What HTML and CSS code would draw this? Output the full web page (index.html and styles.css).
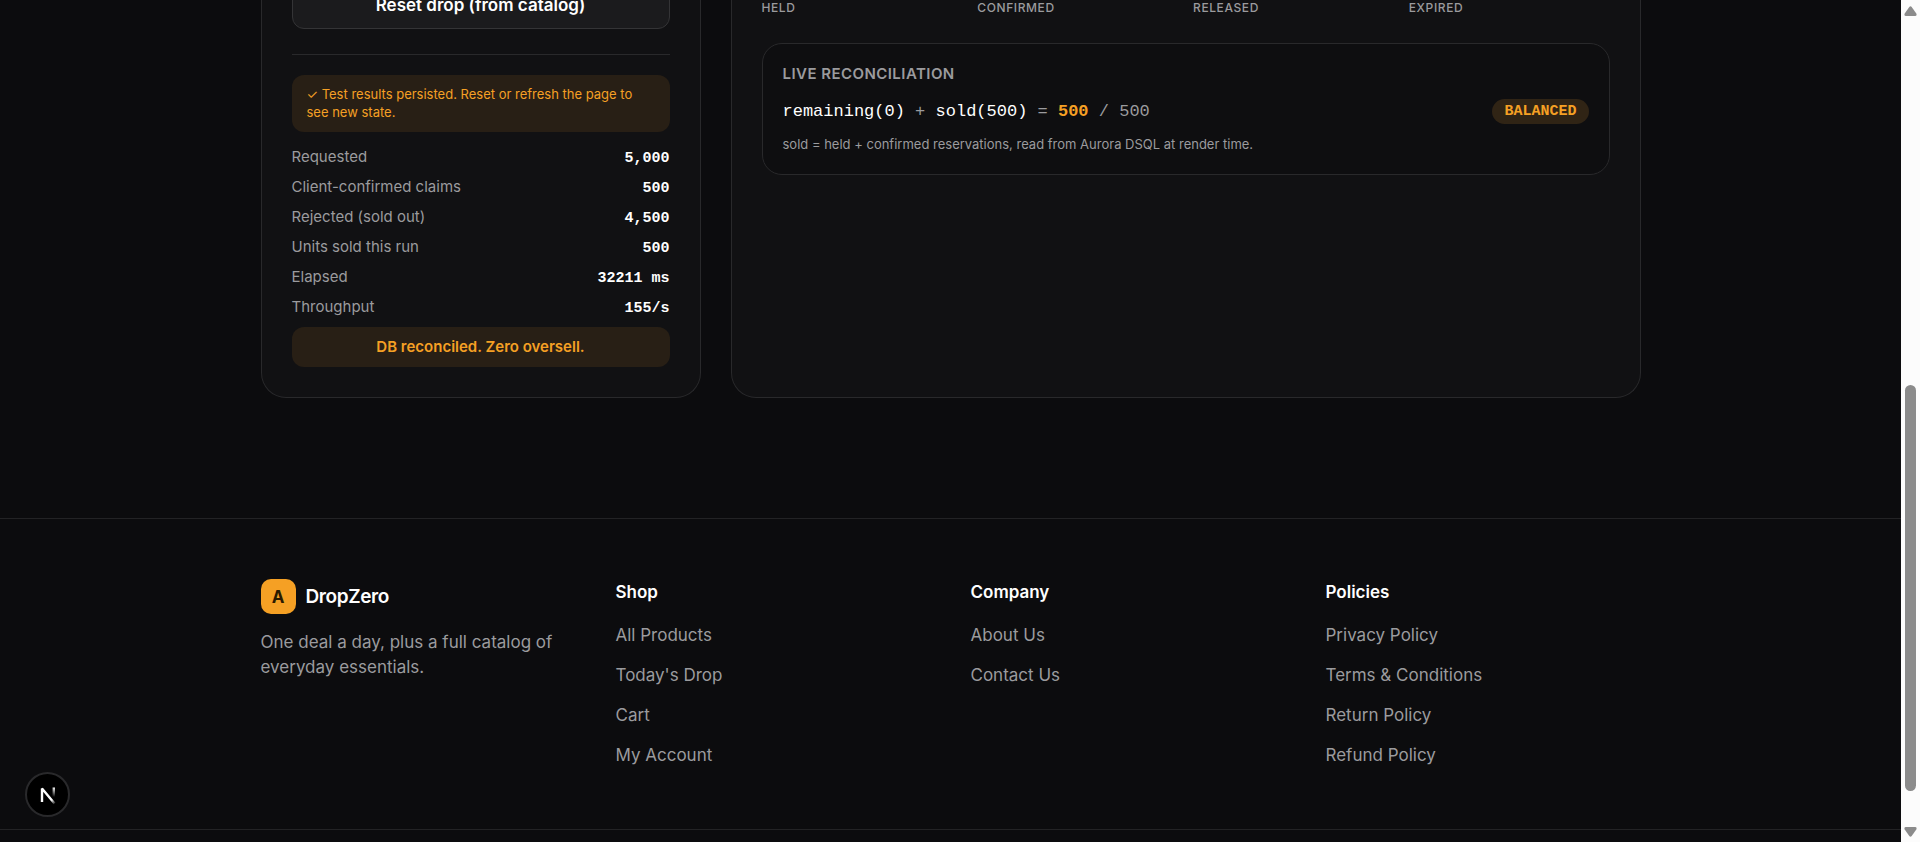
FILE: index.html
```html
<!DOCTYPE html>
<html lang="en">
<head>
  <meta charset="UTF-8" />
  <meta name="viewport" content="width=device-width, initial-scale=1.0" />
  <title>DropZero</title>
  <link rel="stylesheet" href="styles.css">
</head>
<body>
  <div class="page">
    <main class="container drop">
      <section class="card controls">
        <button class="reset-btn" type="button">Reset drop (from catalog)</button>
        <hr class="divider">
        <p class="notice">✓ Test results persisted. Reset or refresh the page to see new state.</p>
        <dl class="results">
          <div class="result"><dt>Requested</dt><dd>5,000</dd></div>
          <div class="result"><dt>Client-confirmed claims</dt><dd>500</dd></div>
          <div class="result"><dt>Rejected (sold out)</dt><dd>4,500</dd></div>
          <div class="result"><dt>Units sold this run</dt><dd>500</dd></div>
          <div class="result"><dt>Elapsed</dt><dd>32211 ms</dd></div>
          <div class="result"><dt>Throughput</dt><dd>155/s</dd></div>
        </dl>
        <p class="verdict">DB reconciled. Zero oversell.</p>
      </section>

      <section class="card stats">
        <div class="stat-labels">
          <span>Held</span>
          <span>Confirmed</span>
          <span>Released</span>
          <span>Expired</span>
        </div>
        <div class="recon">
          <h3>Live reconciliation</h3>
          <div class="recon-row">
            <p class="formula"><b>remaining(0)</b> + <b>sold(500)</b> = <strong>500</strong> / 500</p>
            <span class="badge">BALANCED</span>
          </div>
          <p class="recon-note">sold = held + confirmed reservations, read from Aurora DSQL at render time.</p>
        </div>
      </section>
    </main>

    <footer class="footer">
      <div class="container footer-grid">
        <div>
          <a class="brand" href="#"><span class="brand-mark">A</span>DropZero</a>
          <p class="tagline">One deal a day, plus a full catalog of everyday essentials.</p>
        </div>
        <nav>
          <h4>Shop</h4>
          <ul>
            <li><a href="#">All Products</a></li>
            <li><a href="#">Today's Drop</a></li>
            <li><a href="#">Cart</a></li>
            <li><a href="#">My Account</a></li>
          </ul>
        </nav>
        <nav>
          <h4>Company</h4>
          <ul>
            <li><a href="#">About Us</a></li>
            <li><a href="#">Contact Us</a></li>
          </ul>
        </nav>
        <nav>
          <h4>Policies</h4>
          <ul>
            <li><a href="#">Privacy Policy</a></li>
            <li><a href="#">Terms &amp; Conditions</a></li>
            <li><a href="#">Return Policy</a></li>
            <li><a href="#">Refund Policy</a></li>
          </ul>
        </nav>
      </div>
      <div class="footer-bottom"></div>
    </footer>
  </div>

  <div class="scrollbar" aria-hidden="true">
    <svg width="13" height="10" viewBox="0 0 13 10"><path d="M5.3 1Q6.5-.5 7.7 1L12.3 7.5Q13.3 10 11 10H2Q-.3 10 .7 7.5Z" fill="#8b8b8b"/></svg>
    <div class="track"><div class="thumb"></div></div>
    <svg width="13" height="10" viewBox="0 0 13 10"><path d="M5.3 9Q6.5 10.5 7.7 9L12.3 2.5Q13.3 0 11 0H2Q-.3 0 .7 2.5Z" fill="#8b8b8b"/></svg>
  </div>

  <button class="dev-btn" type="button" aria-label="Open dev tools">
    <svg width="18" height="20" viewBox="0 0 18 20" fill="none">
      <defs>
        <linearGradient id="diag" x1="9" y1="9" x2="16" y2="18" gradientUnits="userSpaceOnUse">
          <stop stop-color="#fff"/><stop offset=".6" stop-color="#fff"/><stop offset="1" stop-color="#fff" stop-opacity="0.2"/>
        </linearGradient>
        <linearGradient id="stem" x1="15" y1="2" x2="15" y2="12" gradientUnits="userSpaceOnUse">
          <stop stop-color="#fff"/><stop offset="1" stop-color="#fff" stop-opacity="0"/>
        </linearGradient>
      </defs>
      <path d="M3 17V3.5L15.5 18.5" stroke="url(#diag)" stroke-width="2.4" stroke-linejoin="bevel"/>
      <path d="M14.8 2.5V12" stroke="url(#stem)" stroke-width="2.4"/>
    </svg>
  </button>
</body>
</html>
```

FILE: styles.css
```css
* { box-sizing: border-box; margin: 0; padding: 0; }
body { display: flex; height: 100vh; overflow: hidden; background: #0c0c0e; color: #fff; font-family: Inter, "Liberation Sans", sans-serif; font-size: 17px; }
a { color: inherit; text-decoration: none; }
ul { list-style: none; }

.page { flex: 1; min-width: 0; overflow: hidden; }
.container { max-width: 1380px; margin: 0 auto; }

/* drop panels */
.drop { display: grid; grid-template-columns: 440fr 910fr; gap: 30px; margin-top: -20px; margin-bottom: 120px; }
.card { background: #111113; border: 1px solid #29292b; border-top: none; border-radius: 0 0 25px 25px; padding: 0 30px 30px; }
.reset-btn { display: block; width: 100%; height: 49px; background: #1b1b1d; color: #fff; border: 1px solid #343436; border-radius: 12px; font-family: inherit; font-size: 17px; font-weight: 600; cursor: pointer; }
.divider { border: none; border-top: 1px solid #29292b; margin: 25px 0 20px; }
.notice { background: #281f15; color: #f5a024; border-radius: 12px; padding: 10px 15px 11px; font-size: 13px; line-height: 18px; }
.results { display: grid; gap: 10px; margin: 15px 0 10px; font-size: 15px; line-height: 20px; }
.result { display: flex; justify-content: space-between; align-items: baseline; height: 20px; }
.result dt { color: #9b9b9e; }
.result dd { font-family: "Liberation Mono", monospace; font-weight: 700; }
.verdict { background: #281f15; color: #f5a024; border-radius: 12px; padding: 10px; font-size: 15px; line-height: 20px; font-weight: 600; text-align: center; }

.stats { padding-top: 18px; }
.stat-labels { display: grid; grid-template-columns: repeat(4, 1fr); gap: 15px; color: #9b9b9e; font-size: 12px; line-height: 20px; font-weight: 500; letter-spacing: 0.05em; text-transform: uppercase; }
.recon { margin-top: 25px; padding: 20px; background: #0e0e10; border: 1px solid #29292b; border-radius: 20px; color: #9b9b9e; }
.recon h3 { font-size: 15px; line-height: 20px; font-weight: 600; letter-spacing: 0.03em; text-transform: uppercase; }
.recon-row { display: flex; justify-content: space-between; align-items: center; margin: 15px 0 10px; }
.formula { font-family: "Liberation Mono", monospace; font-size: 17px; line-height: 25px; }
.formula b { color: #fff; font-weight: 400; }
.formula strong { color: #f5a024; }
.badge { padding: 0 12px; background: #302415; color: #f5a024; border-radius: 20px; font-family: "Liberation Mono", monospace; font-size: 15px; line-height: 25px; font-weight: 700; }
.recon-note { font-size: 13px; line-height: 20px; }

/* footer */
.footer { border-top: 1px solid #232325; }
.footer-grid { display: grid; grid-template-columns: repeat(4, 1fr); gap: 40px; padding: 60px 0 61px; }
.brand { display: flex; align-items: center; gap: 10px; font-size: 19px; font-weight: 600; letter-spacing: -0.02em; }
.brand-mark { display: grid; place-items: center; width: 35px; height: 35px; background: #f5a024; color: #2a1a00; border-radius: 10px; font-size: 17px; font-weight: 700; }
.tagline { margin-top: 16px; color: #9b9b9e; line-height: 25px; }
.footer h4 { font-size: 17px; line-height: 26px; font-weight: 600; margin-bottom: 18px; }
.footer ul { display: grid; gap: 15px; color: #9b9b9e; line-height: 25px; }
.footer-bottom { height: 70px; border-top: 1px solid #232325; }

/* scrollbar strip */
.scrollbar { display: flex; flex-direction: column; align-items: center; width: 19px; padding: 6px 3px 5px; background: #fcfcfc; }
.track { flex: 1; width: 11px; padding: 369px 0 36px; }
.thumb { height: 100%; background: #8b8b8b; border-radius: 6px; }

.dev-btn { position: fixed; left: 25px; bottom: 25px; display: grid; place-items: center; width: 45px; height: 45px; background: #000; border: 2px solid #29292b; border-radius: 50%; cursor: pointer; }
```
